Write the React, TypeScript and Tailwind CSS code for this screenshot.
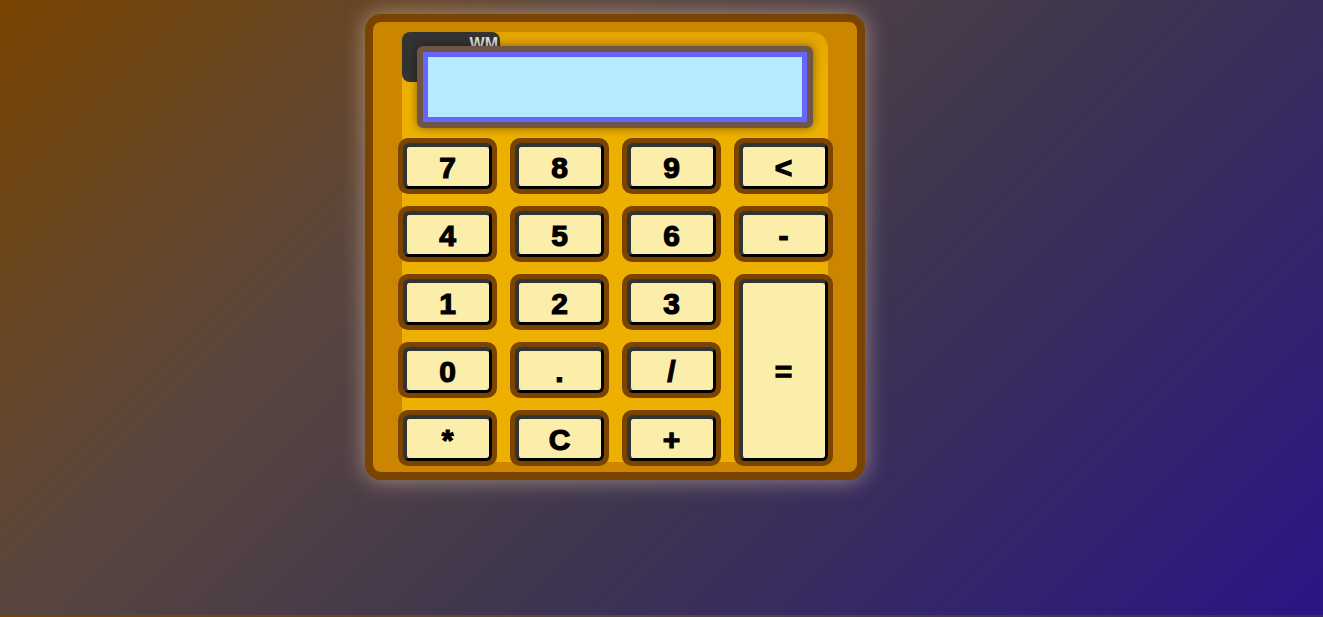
const keys: { label: string; tall?: boolean }[] = [
  { label: "7" },
  { label: "8" },
  { label: "9" },
  { label: "<" },
  { label: "4" },
  { label: "5" },
  { label: "6" },
  { label: "-" },
  { label: "1" },
  { label: "2" },
  { label: "3" },
  { label: "=", tall: true },
  { label: "0" },
  { label: "." },
  { label: "/" },
  { label: "*" },
  { label: "C" },
  { label: "+" },
];

const Key = ({ label, tall }: { label: string; tall?: boolean }) => (
  <div
    className={`rounded-[10px] bg-[#7b4300] p-[5px] ${tall ? "row-span-3" : ""}`}
  >
    <button className="flex h-full w-full items-center justify-center rounded-[6px] border-t-[4px] border-l-[4px] border-r-[3px] border-b-[3px] border-t-[#333] border-l-[#333] border-r-black border-b-black bg-[#faeeaa] pt-[2px] font-['Liberation_Sans',Arial,sans-serif] text-[30px] font-bold leading-none text-black [-webkit-text-stroke:1.2px_black]">
      {label}
    </button>
  </div>
);

export default function App() {
  return (
    <div className="h-[617px] w-full bg-[linear-gradient(135deg,#784400_0%,#5a463e_31%,#3d3550_59%,#2a1585_100%)] bg-[length:100%_615px] bg-repeat pt-[14px]">
      <div className="ml-[365px] h-[466px] w-[500px] rounded-[16px] border-[8px] border-[#7b4300] bg-[#cc8500] px-[29px] py-[10px] shadow-[0_0_22px_rgba(255,225,190,0.5)]">
        <div className="relative h-[430px] w-[426px] rounded-tl-[8px] rounded-tr-[16px] bg-[linear-gradient(180deg,#e4a400,#eeb000_12%)] pt-[14px]">
          <div className="absolute left-0 top-0 h-[50px] w-[98px] rounded-[8px] bg-[#333]">
            <span className="absolute right-[2px] top-[4px] font-['Liberation_Sans',sans-serif] text-[16px] font-bold leading-none text-[#ddd]">
              WM
            </span>
          </div>

          <div className="relative z-10 mx-[15px] h-[82px] rounded-[6px] border-[6px] border-[#6e5545] shadow-[0_0_10px_rgba(0,0,0,0.45)]">
            <div className="h-full w-full border-[5px] border-[#6666ff] bg-[#b8eaff]" />
          </div>

          <div className="mt-[10px] flex justify-center">
            <div className="grid shrink-0 grid-cols-[repeat(4,99px)] grid-rows-[repeat(5,56px)] gap-x-[13px] gap-y-[12px]">
              {keys.map((k) => (
                <Key key={k.label} label={k.label} tall={k.tall} />
              ))}
            </div>
          </div>
        </div>
      </div>
    </div>
  );
}
